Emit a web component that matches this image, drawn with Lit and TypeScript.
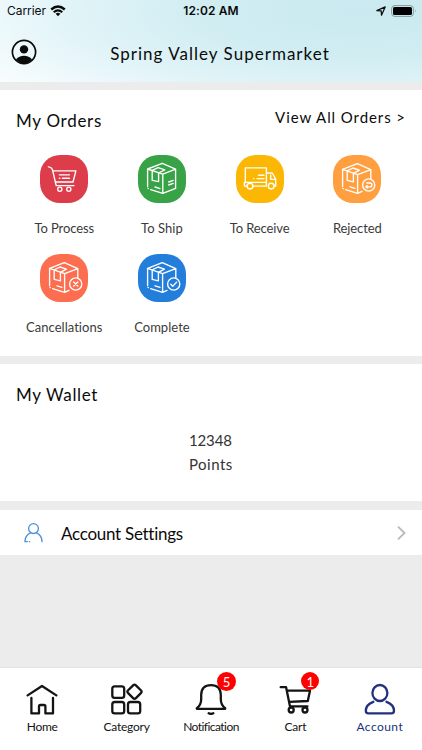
import { LitElement, html, svg, css } from "lit";
import { customElement } from "lit/decorators.js";

const boxFace = svg`
  <path d="M9.6 14 L24.3 8.3 L37.6 14.2 V33.4 L24.8 38.4 V19.2 L37.6 14.2 M24.8 19.2 L9.6 14 V31.8"/>
  <path d="M10 33.6h.4 M12.6 34.6 L24.8 38.4"/>
  <path d="M14.2 15.8 V25.4 L20.6 26.6 V18 L26.8 14.8 L20.2 12.6 L14.2 15.4"/>
  <path d="M17 32 L22 33.6"/>`;

const boxBadge = (mark: unknown, bg: string) => svg`
  <path d="M9.6 14.4 L24.3 8.6 L37.8 14.6 V24 M29 36.4 L24.6 38.4 V19.6 L37.8 14.6 M24.6 19.6 L9.6 14.4 V31.8"/>
  <path d="M10 33.6h.4 M12.6 34.6 L24.6 38.4"/>
  <path d="M14.2 16.2 V25.4 L20.4 26.8 V18.4 L26.4 15.2 L20 13 L14.2 15.8"/>
  <path d="M17 31.8 L22 33.4"/>
  <circle cx="35.7" cy="30" r="6.1" fill=${bg}/>${mark}`;

const orders = [
  { label: "To Process", cls: "w1", color: "#dd3d4b", icon: svg`
    <path d="M8.4 11.8 Q12 12 12.8 16 L16.2 30.6 H34"/>
    <path d="M13 15.8 H35.9 L33 27 H15.4"/>
    <path d="M19.4 19.8 H29.4 M19.4 23.2 h.4 M22.4 23.2 H29.4"/>
    <circle cx="19.8" cy="34.2" r="2.1"/><circle cx="28.8" cy="34.2" r="2.1"/>` },
  { label: "To Ship", cls: "w2", color: "#37a246", icon: svg`${boxFace}
    <path d="M30.7 27 L35.2 25.4 M30.7 30 L35.2 28.4"/>` },
  { label: "To Receive", cls: "w3", color: "#fbb703", icon: svg`
    <path d="M10.8 31.1 H8.4 V27.4 H30.6 M9.3 27.2 V12.9 H30.4 V31.1 H17.2 M30.4 18 H36.2 L39.7 24 V31.1 H38.3 M39.5 24.3 H34.7 V20"/>
    <circle cx="14" cy="31.1" r="2.9"/><circle cx="35.2" cy="31.1" r="2.9"/>
    <path d="M22.6 20.2 H28 M17.6 23.6 h.3 M21 23.6 H28"/>` },
  { label: "Rejected", cls: "w4", color: "#ff9f40", icon: boxBadge(
    svg`<path d="M33.8 28 H37 A1.8 1.8 0 0 1 37 31.8 H33 M34.2 30.6 L32.8 31.8 L34.2 33"/>`, "#ff9f40") },
  { label: "Cancellations", cls: "w5", color: "#fd6d4f", icon: boxBadge(
    svg`<path d="M33.6 27.9 L37.8 32.1 M37.8 27.9 L33.6 32.1"/>`, "#fd6d4f") },
  { label: "Complete", cls: "w6", color: "#237edb", icon: boxBadge(
    svg`<path d="M32.8 30.2 L34.8 32.2 L38.6 28.1"/>`, "#237edb") },
];

const tabs = [
  { label: "Home", cls: "n1", badge: "", icon: svg`
    <path d="M1.6 12.4 L16 3 L30.4 12.4 M5.4 15 V30.4 H13 V23.4 Q13 22 14.4 22 H18 Q19.4 22 19.4 23.4 V30.4 H27 V15"/>` },
  { label: "Category", cls: "n2", badge: "", icon: svg`
    <rect x="1.3" y="3.4" width="11.9" height="11.4" rx="2.4"/>
    <rect x="1.3" y="19" width="11.9" height="11.4" rx="2.4"/>
    <rect x="17" y="19" width="12.2" height="11.4" rx="2.4"/>
    <rect x="18" y="3.2" width="11" height="11" rx="2" transform="rotate(45 23.5 8.7)"/>` },
  { label: "Notification", cls: "n3", badge: "5", icon: svg`
    <path d="M1.8 25.2 Q6.2 22 6.2 16 V11.8 Q6.5 2.2 16 2.2 Q25.5 2.2 25.8 11.8 V16 Q25.8 22 30.2 25.2 V25.8 H1.8 Z"/>
    <path d="M13.7 30.3 Q16 31.5 18.3 30.3"/>` },
  { label: "Cart", cls: "n4", badge: "1", icon: svg`
    <path d="M1.7 4.2 H7.1 L11 23.4 H28.4 M8.2 7.7 H31 L28.8 18 L10.4 18.8"/>
    <circle cx="12.2" cy="27" r="2.5"/><circle cx="26" cy="27" r="2.5"/>` },
  { label: "Account", cls: "n5 active", badge: "", icon: svg`
    <ellipse cx="15.9" cy="10" rx="7.5" ry="8"/>
    <path d="M9.3 18.8 Q1.8 21.5 1.8 27.8 Q1.8 30.4 4.3 30.4 H27.5 Q30 30.4 30 27.8 Q30 21.5 22.5 18.8"/>` },
];

@customElement("app-root")
export class AppRoot extends LitElement {
  static styles = css`
    :host { display: flex; flex-direction: column; width: 422px; height: 750px; overflow: hidden;
      background: #ececec; color: #0b0b0b; font-family: Lato, "Open Sans", sans-serif; font-variant-ligatures: none; }
    * { box-sizing: border-box; }
    svg { display: block; fill: none; stroke: currentColor; stroke-linecap: round; stroke-linejoin: round; flex: none; }
    span, h1, h2 { white-space: nowrap; }
    h1, h2 { margin: 0; font-weight: 400; }
    header { height: 82px; flex: none;
      background: radial-gradient(ellipse 440px 120px at 86% 15%, #c9e9f0 0%, #d0edf2 35%, #e2f4f8 68%, #f8fdfe 100%); }
    .status { height: 22px; display: grid; grid-template-columns: 1fr auto 1fr; align-items: center;
      padding: 0 7px; font: 400 12px/22px Inter, sans-serif; }
    .carrier, .power { display: flex; align-items: center; gap: 5px; }
    .carrier { gap: 4px; }
    .carrier span { letter-spacing: -0.05px; }
    .time { font-weight: 600; letter-spacing: 0.1px; }
    .power { justify-content: flex-end; }
    .power svg:last-child { margin-right: -1px; }
    .bar { display: flex; align-items: center; padding: 0 0 0 11px; height: 60px; }
    h1 { flex: 1; font-size: 17px; line-height: 24px; text-align: center; letter-spacing: 1.02px; padding: 3px 19px 0 0; }
    .bar svg { margin-top: -1px; }
    .orders { background: #fff; margin-top: 8px; height: 266px; flex: none; }
    .heading { display: flex; justify-content: space-between; padding: 16px 16px 0; height: 65px; }
    h2 { font-size: 17px; line-height: 30px; letter-spacing: 0.72px; }
    .all { font-size: 15px; line-height: 23px; letter-spacing: 0.92px; }
    .grid { display: grid; grid-template-columns: repeat(4, 97.7px); padding-left: 15.4px; grid-auto-rows: 98.7px; }
    .item { display: flex; flex-direction: column; align-items: center; gap: 15px; }
    .tile { width: 48px; height: 48px; border-radius: 20px; color: #fff; background: var(--tile); }
    .tile svg { stroke-width: 1.35; }
    .item span { font-size: 13px; line-height: 20px; color: #3b3b3b; letter-spacing: -0.1px; }
    .item.w2 span, .item.w6 span, .item.w5 span { letter-spacing: 0.03px; }
    .wallet { background: #fff; margin-top: 8px; height: 137px; flex: none; padding: 16px 16px 0; }
    .wallet h2 { letter-spacing: 0.66px; }
    .points { display: flex; flex-direction: column; width: 44px; margin: 18px 0 0 173px;
      font-size: 15px; line-height: 24.5px; color: #333; }
    .p1 { letter-spacing: -0.15px; }
    .p2 { letter-spacing: 0.5px; margin-top: -1px; }
    .settings { background: #fff; margin-top: 9px; height: 45px; flex: none; display: flex; align-items: center; padding: 0 16px 0 24px; }
    .person { color: #4a90dc; }
    .settings span { flex: 1; font-size: 17px; line-height: 24px; padding: 3px 0 0 18px; letter-spacing: -0.27px; }
    .chev { color: #b9b9b9; }
    nav { margin-top: auto; height: 82px; flex: none; background: #fff; display: grid; grid-template-columns: repeat(5, 1fr);
      box-shadow: 0 -1px 0 #e2e2e2; }
    .tab { display: flex; flex-direction: column; align-items: center; padding-top: 15px; color: #141414; }
    .tab > span { font-size: 12px; line-height: 16px; margin-top: 4px; letter-spacing: -0.25px; }
    .tab.n3 > span { letter-spacing: -0.55px; }
    .icon { position: relative; }
    .icon svg { stroke-width: 2.3; }
    .badge { position: absolute; left: 22px; top: -11px; width: 19px; height: 19px; border-radius: 50%;
      background: #fe0000; color: #fff; font-size: 13px; line-height: 20px; text-align: center; }
    .n4 .badge { width: 18px; height: 18px; }
    .active { color: #22327e; }
    .tab.n5 > span { letter-spacing: 0.45px; }
  `;

  render() {
    return html`
      <header>
        <div class="status">
          <div class="carrier"><span>Carrier</span>
            <svg width="16" height="12" viewBox="0 0 16 12">
              <path d="M1.2 4.5 Q8 -1.7 14.8 4.5" stroke-width="2.4" stroke-linecap="butt"/>
              <path d="M3.7 7.2 Q8 3.4 12.3 7.2" stroke-width="2.1" stroke-linecap="butt"/>
              <path d="M5.6 8.7 Q8 6.8 10.4 8.7 L8 11.3 Z" fill="currentColor" stroke="none"/>
            </svg>
          </div>
          <span class="time">12:02 AM</span>
          <div class="power">
            <svg width="10" height="10" viewBox="0 0 10 10" stroke-width="1.2"><path d="M.8 4.6 L9.2 .9 L5.5 9.2 L5.2 4.9 Z"/></svg>
            <svg width="25" height="12" viewBox="0 0 25 12">
              <rect x=".6" y=".6" width="21.8" height="10.8" rx="3" stroke="#829b9e"/>
              <rect x="2" y="2" width="19" height="8" rx="1.6" fill="#000" stroke="none"/>
              <path d="M24 4.6 Q25.2 6 24 7.4 Z" fill="#829b9e" stroke="none"/>
            </svg>
          </div>
        </div>
        <div class="bar">
          <svg width="26" height="26" viewBox="0 0 26 26">
            <circle cx="13" cy="13" r="11.6" stroke-width="1.7"/>
            <circle cx="13" cy="10.4" r="4.2" fill="currentColor" stroke="none"/>
            <path d="M5 20.5 Q8 16.8 13 16.8 Q18 16.8 21 20.5 Q17.5 24.5 13 24.5 Q8.5 24.5 5 20.5Z" fill="currentColor" stroke="none"/>
          </svg>
          <h1>Spring Valley Supermarket</h1>
        </div>
      </header>
      <section class="orders">
        <div class="heading"><h2>My Orders</h2><span class="all">View All Orders &gt;</span></div>
        <div class="grid">
          ${orders.map(o => html`
            <div class="item ${o.cls}">
              <div class="tile" style="--tile:${o.color}"><svg width="48" height="48" viewBox="0 0 48 48">${o.icon}</svg></div>
              <span>${o.label}</span>
            </div>`)}
        </div>
      </section>
      <section class="wallet">
        <h2>My Wallet</h2>
        <div class="points"><span class="p1">12348</span><span class="p2">Points</span></div>
      </section>
      <section class="settings">
        <svg class="person" width="19" height="20" viewBox="0 0 19 20" stroke-width="1.3">
          <circle cx="9.5" cy="5.6" r="4.9"/>
          <path d="M6.6 9.8 Q1 12.2 1 18.7 H3.4 M5.4 18.7 h.3 M12.4 9.8 Q18 12.2 18 18.7"/>
        </svg>
        <span>Account Settings</span>
        <svg class="chev" width="9" height="14" viewBox="0 0 9 14" stroke-width="1.8"><path d="M1.5 1.2 L7.5 7 L1.5 12.8"/></svg>
      </section>
      <nav>
        ${tabs.map(t => html`
          <div class="tab ${t.cls}">
            <div class="icon"><svg width="32" height="32" viewBox="0 0 32 32">${t.icon}</svg>
              ${t.badge ? html`<span class="badge">${t.badge}</span>` : ""}</div>
            <span>${t.label}</span>
          </div>`)}
      </nav>`;
  }
}
